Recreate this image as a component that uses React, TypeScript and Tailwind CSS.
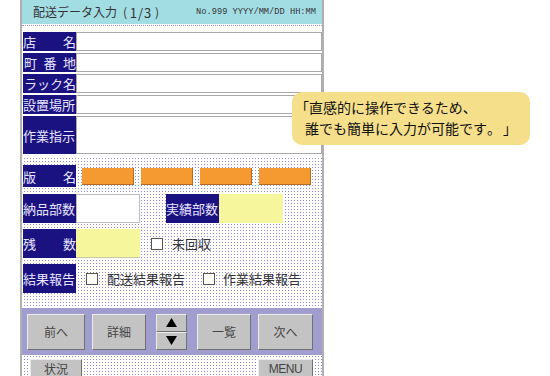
import React from "react";

const dots =
  "bg-[linear-gradient(90deg,#ffffff_2px,transparent_2px),linear-gradient(#ffffff_2px,#9189d8_2px)] bg-size-[3px_3px]";

const font = "font-['Noto_Sans_CJK_JP','Noto_Sans',sans-serif]";

function Label({ children, className = "" }: { children: React.ReactNode; className?: string }) {
  return (
    <div
      className={`bg-[#1b1281] text-[#e6e4ff] text-[13px] leading-none whitespace-nowrap flex items-center w-[53px] shrink-0 ${className}`}
    >
      {children}
    </div>
  );
}

function Spread({ a, b }: { a: string; b: string }) {
  return (
    <span className="flex w-full justify-between">
      <span>{a}</span>
      <span>{b}</span>
    </span>
  );
}

function Check() {
  return <span className="inline-block w-[12px] h-[12px] border border-[#555] bg-white shrink-0" />;
}

function Btn({ children, className = "" }: { children: React.ReactNode; className?: string }) {
  return (
    <div
      className={`bg-[#c3c3c3] border border-t-[#ececec] border-l-[#ececec] border-r-[#707070] border-b-[#707070] flex items-center justify-center text-[12px] text-[#444] ${className}`}
    >
      {children}
    </div>
  );
}

export default function App() {
  return (
    <div className={`relative w-[550px] h-[376px] bg-white overflow-hidden ${font}`}>
      <div className="ml-[20px] w-[304px] h-[376px] border-x-2 border-[#b0b0b0] flex flex-col">
        {/* header */}
        <div className="h-[24px] bg-[#a3dde4] flex items-center justify-between pl-[11px] pr-[6px] shrink-0">
          <span className="text-[12px] text-[#333] leading-none whitespace-nowrap flex items-center">
            <span className="w-[82px] flex justify-between">
              <span>配</span><span>送</span><span>デ</span><span>ー</span><span>タ</span><span>入</span><span>力</span>
            </span>
            <span className="w-[12px] text-right">(</span>
            <span className="w-[28px] text-center text-[13px] tracking-[1px]">1/3</span>
            <span className="w-[6px]">)</span>
          </span>
          <span className="text-[8.7px] text-[#333] leading-none whitespace-nowrap font-['Liberation_Mono',monospace]">
            No.999 YYYY/MM/DD HH:MM
          </span>
        </div>
        <div className="h-px mt-px border-t border-dotted border-[#9b95d5]" />
        {/* text rows */}
        <div className="flex flex-col gap-[2px] pl-px pt-[6px] bg-white shrink-0">
          <div className="flex h-[19px]">
            <Label><Spread a="店" b="名" /></Label>
            <div className="flex-1 border border-[#a8a8a8] bg-white" />
          </div>
          <div className="flex h-[19px]">
            <Label><span className="flex w-full justify-between pl-px"><span>町</span><span>番</span><span>地</span></span></Label>
            <div className="flex-1 border border-[#a8a8a8] bg-white" />
          </div>
          <div className="flex h-[19px]">
            <Label><span className="flex w-full justify-between pl-px"><span>ラ</span><span>ッ</span><span>ク</span><span>名</span></span></Label>
            <div className="flex-1 border border-[#a8a8a8] bg-white" />
          </div>
          <div className="flex h-[19px]">
            <Label>設置場所</Label>
            <div className="flex-1 border border-[#a8a8a8] bg-white" />
          </div>
          <div className="flex h-[38px]">
            <Label>作業指示</Label>
            <div className="flex-1 border border-[#a8a8a8] bg-white" />
          </div>
        </div>
        {/* dotted area */}
        <div className={`flex-1 mt-[2px] pl-px pt-[9px] flex flex-col ${dots}`}>
          <div className="flex h-[22px] items-center">
            <Label className="h-full"><Spread a="版" b="名" /></Label>
            <div className="flex gap-[7px] ml-[6px]">
              <div className="w-[52px] h-[17px] bg-[#f59a31] border-r border-b border-[#b86a1e]" />
              <div className="w-[52px] h-[17px] bg-[#f59a31] border-r border-b border-[#b86a1e]" />
              <div className="w-[52px] h-[17px] bg-[#f59a31] border-r border-b border-[#b86a1e]" />
              <div className="w-[52px] h-[17px] bg-[#f59a31] border-r border-b border-[#b86a1e]" />
            </div>
          </div>
          <div className="flex h-[29px] mt-[7px]">
            <Label>納品部数</Label>
            <div className="w-[64px] bg-white border border-[#bdbdbd]" />
            <Label className="ml-[26px]">実績部数</Label>
            <div className="w-[64px] bg-[#f6f69c]" />
          </div>
          <div className="flex h-[29px] mt-[6px] items-center">
            <Label className="h-full"><Spread a="残" b="数" /></Label>
            <div className="w-[64px] h-full bg-[#f6f69c] border-b border-[#c9c9a0]" />
            <div className="ml-[11px] flex items-center gap-[9px] text-[13px] text-[#333]">
              <Check />
              <span>未回収</span>
            </div>
          </div>
          <div className="flex h-[29px] mt-[6px] items-center">
            <Label className="h-full">結果報告</Label>
            <div className="ml-[10px] flex items-center gap-[9px] text-[13px] text-[#333]">
              <Check />
              <span>配送結果報告</span>
            </div>
            <div className="ml-[18px] flex items-center gap-[8px] text-[13px] text-[#333]">
              <Check />
              <span>作業結果報告</span>
            </div>
          </div>
          {/* button bar */}
          <div className="-ml-px mt-[15px] h-[47px] bg-[#a19dcf] flex items-center pl-[5px]">
            <Btn className="w-[58px] h-[36px]">前へ</Btn>
            <Btn className="w-[54px] h-[36px] ml-[7px]">詳細</Btn>
            <div className="w-[31px] h-[36px] ml-[10px] flex flex-col">
              <Btn className="h-[18px]">
                <svg width="11" height="9" viewBox="0 0 11 9"><polygon points="5.5,0 11,9 0,9" fill="#000" /></svg>
              </Btn>
              <Btn className="h-[18px]">
                <svg width="11" height="9" viewBox="0 0 11 9"><polygon points="0,0 11,0 5.5,9" fill="#000" /></svg>
              </Btn>
            </div>
            <Btn className="w-[54px] h-[36px] ml-[10px]">一覧</Btn>
            <Btn className="w-[55px] h-[36px] ml-[7px]">次へ</Btn>
          </div>
          {/* status row */}
          <div className="flex mt-[4px] pl-[7px]">
            <Btn className="w-[52px] h-[20px]">状況</Btn>
            <Btn className="w-[55px] h-[20px] ml-[176px] font-['Liberation_Sans',sans-serif] text-[11px] tracking-[-0.5px]">MENU</Btn>
          </div>
        </div>
      </div>
      {/* callout */}
      <div className="absolute left-[292px] top-[92px] w-[238px] h-[53px] rounded-[10px] bg-[#f6df8b] text-[14px] leading-[21px] text-[#111] pl-[3px] pt-[5px] whitespace-nowrap">
        <div>「直感的に操作できるため、</div>
        <div className="pl-[10px] flex">
          <span>誰でも簡単に入力が可能です</span>
          <span className="inline-block w-[16px]">。</span>
          <span className="inline-block w-[14px]">」</span>
        </div>
      </div>
    </div>
  );
}
